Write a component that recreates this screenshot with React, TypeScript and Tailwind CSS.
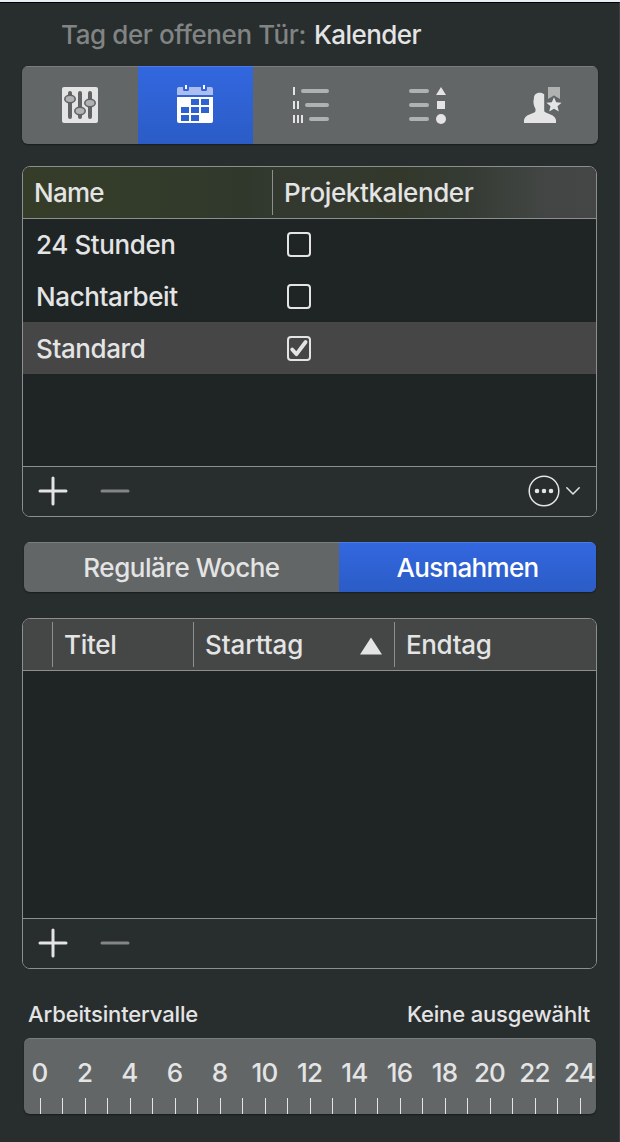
import React, { useState } from 'react';
import clsx from 'clsx';

const calendars = [
    { name: '24 Stunden', project: false },
    { name: 'Nachtarbeit', project: false },
    { name: 'Standard', project: true },
];

const hours = Array.from({ length: 13 }, (_, i) => i * 2);
const ticks = Array.from({ length: 25 }, (_, i) => 16 + i * 22.5);

const SlidersIcon = () => (
    <svg width="36" height="36" viewBox="0 0 36 36">
        <rect width="36" height="36" rx="2" fill="#e4e4e5" />
        <path d="M8 6V30M18 6V30M28 6V30" stroke="#606465" strokeWidth="4" strokeLinecap="round" />
        <g fill="#b1b3b3" stroke="#606465" strokeWidth="1.6">
            <ellipse cx="8" cy="12" rx="5.2" ry="3.7" />
            <ellipse cx="18" cy="24" rx="5.2" ry="3.7" />
            <ellipse cx="28" cy="16" rx="5.2" ry="3.7" />
        </g>
    </svg>
);

const CalendarIcon = () => (
    <svg width="36" height="38" viewBox="0 0 36 38">
        <path d="M2 2H6V4.5Q6 6 7.5 6H10.5Q12 6 12 4.5V2H24V4.5Q24 6 25.5 6H28.5Q30 6 30 4.5V2H34Q36 2 36 4V10H0V4Q0 2 2 2Z" fill="#abbeee" />
        <path d="M8 0H10V4H8ZM26 0H28V4H26Z" fill="#fff" />
        <path
            fillRule="evenodd"
            d="M0 12H36V36Q36 38 34 38H2Q0 38 0 36ZM14 14V20H22V14ZM24 14V20H32V14ZM4 22V28H12V22ZM14 22V28H22V22ZM24 22V28H32V22ZM4 30V36H12V30ZM14 30V36H22V30Z"
            fill="#fff"
        />
    </svg>
);

const OutlineIcon = () => (
    <svg width="38" height="36" viewBox="0 0 38 36">
        <path d="M2 0V8M2 14V22M6 14V22M2 28V36M6 28V36M10 28V36" stroke="#e4e4e5" strokeWidth="2" />
        <path d="M11 4H35M15 18H35M19 32H35" stroke="#b0b2b2" strokeWidth="4" strokeLinecap="round" />
    </svg>
);

const ShapesIcon = () => (
    <svg width="38" height="38" viewBox="0 0 38 38">
        <path d="M3 5H19M3 19H19M3 33H19" stroke="#b0b2b2" strokeWidth="4" strokeLinecap="round" />
        <path d="M33 1L38 9H28ZM29 15H37V23H29Z" fill="#e4e4e5" />
        <circle cx="33" cy="33" r="5" fill="#e4e4e5" />
    </svg>
);

const ResourceIcon = () => (
    <svg width="38" height="36" viewBox="0 0 38 36">
        <path d="M24 0H36V12L30 8.500L24 12Z" fill="#b0b2b2" />
        <path
            d="M15.500 5.700C17.500 5.600 19 6.200 20.200 7.300V23C20.200 24 20.400 24.600 21 25C23.500 27 31 27.500 32 33V36H0V33C1 27.500 8.500 27 11 25C11.800 24 11.600 22 11.200 21.200C10 19 9.600 17.500 9.500 15.500C9.300 14 9.700 13 9.900 12C9.700 7.700 12 5.800 15.500 5.700Z"
            fill="#e4e4e5"
        />
        <path
            d="M30 10.200L32.200 15.300L37.600 15.700L33.500 19.300L34.800 24.600L30 21.800L25.200 24.600L26.500 19.300L22.400 15.700L27.800 15.300Z"
            fill="#e4e4e5"
            stroke="#606465"
            strokeWidth="1.500"
            paintOrder="stroke"
        />
    </svg>
);

const Checkbox = ({ checked, onChange }: { checked: boolean; onChange: () => void }) => (
    <button
        role="checkbox"
        aria-checked={checked}
        onClick={onChange}
        className="flex h-[25px] w-6 items-center justify-center rounded-[4px] border-2 border-[#e4e4e5]"
    >
        {checked && (
            <svg width="20" height="20" viewBox="0 0 20 20" className="shrink-0">
                <path d="M3.200 11.500L7.500 16.200L16.600 4" fill="none" stroke="#e4e4e5" strokeWidth="3.800" strokeLinecap="round" strokeLinejoin="round" />
            </svg>
        )}
    </button>
);

const TableFooter = ({ children }: { children?: React.ReactNode }) => (
    <div className="flex h-[50px] shrink-0 items-center border-t border-[#8d8f8f] bg-[#282d2d] pb-0.5 pl-[15px] pr-4">
        <button className="mr-8" aria-label="Hinzufügen">
            <svg width="30" height="30" viewBox="0 0 30 30">
                <path d="M2 15H28M15 2V28" stroke="#e4e4e5" strokeWidth="3" strokeLinecap="round" />
            </svg>
        </button>
        <button aria-label="Entfernen">
            <svg width="30" height="30" viewBox="0 0 30 30">
                <path d="M2 15H28" stroke="#838586" strokeWidth="3" strokeLinecap="round" />
            </svg>
        </button>
        {children}
    </div>
);

const tabs = [
    { id: 'project', Icon: SlidersIcon, pad: 'pb-px' },
    { id: 'calendar', Icon: CalendarIcon, pad: 'pb-[3px] pr-px' },
    { id: 'outline', Icon: OutlineIcon, pad: 'pb-px pl-px' },
    { id: 'shapes', Icon: ShapesIcon, pad: 'pb-px pl-0.5' },
    { id: 'resource', Icon: ResourceIcon, pad: 'pb-px pl-1' },
];

const App = () => {
    const [activeTab, setActiveTab] = useState('calendar');
    const [mode, setMode] = useState('exceptions');
    const [rows, setRows] = useState(calendars);

    const toggle = (name: string) => {
        setRows(rows.map(r => (r.name === name ? { ...r, project: !r.project } : r)));
    };

    return (
        <div className="h-[1142px] w-[620px] overflow-hidden border-t-2 border-[#e9eef6] bg-[#282d2d] font-['Inter',sans-serif] text-[26px] font-[450] text-[#e4e4e5]">
            <div className="flex h-full flex-col border-r border-t border-r-[#3b4040] border-t-black pl-[22px] pr-[21px]">
                {/* Title */}
                <h1 className="flex h-[63px] shrink-0 items-center gap-2 whitespace-nowrap pl-[39px]">
                    <span className="tracking-[-0.4px] text-[#818484]">Tag der offenen Tür:</span>
                    <span className="tracking-[-0.55px]">Kalender</span>
                </h1>

                {/* Inspector tabs */}
                <div className="grid h-[78px] shrink-0 grid-cols-[116px_115px_115px_116px_114px] overflow-hidden rounded-md bg-[#626666] shadow-[0_1px_2px_rgba(0,0,0,0.4)]">
                    {tabs.map(({ id, Icon, pad }) => (
                        <button
                            key={id}
                            aria-label={id}
                            onClick={() => setActiveTab(id)}
                            className={clsx(
                                'flex items-center justify-center border-t',
                                pad,
                                activeTab === id ? 'border-[#4c7ae6] bg-linear-to-b from-[#3367df] to-[#2b5cc6]' : 'border-[#7b7e7f]'
                            )}
                        >
                            <Icon />
                        </button>
                    ))}
                </div>

                {/* Calendars */}
                <div className="mt-[22px] flex h-[351px] w-[575px] shrink-0 flex-col overflow-hidden rounded-lg border border-[#8d8f8f] bg-[#1f2424]">
                    <div className="flex h-[52px] shrink-0 items-center border-b border-[#8d8f8f] bg-[linear-gradient(90deg,#353d29_0%,#333c2a_20%,#30382c_38%,#343930_50%,#33382b_66%,#343b33_77%,#424543_90%,#454746_100%)]">
                        <div className="w-[249px] pl-[11px]">
                            <span className="tracking-[-0.75px]">Name</span>
                        </div>
                        <div className="flex h-[45px] items-center border-l border-[#8d8f8f] pl-[11px]">
                            <span className="tracking-[-0.4px]">Projektkalender</span>
                        </div>
                    </div>
                    <div className="-mt-px grow">
                        {rows.map(row => (
                            <div key={row.name} className={clsx('flex h-[52px] items-center', row.name === 'Standard' && 'bg-[#464646]')}>
                                <div className="w-[264px] pl-[13px]">
                                    <span className="tracking-[-0.4px]">{row.name}</span>
                                </div>
                                <Checkbox checked={row.project} onChange={() => toggle(row.name)} />
                            </div>
                        ))}
                    </div>
                    <TableFooter>
                        <button className="ml-auto flex items-center gap-1.5" aria-label="Aktionen">
                            <svg width="32" height="32" viewBox="0 0 32 32">
                                <circle cx="16" cy="16" r="14.800" fill="none" stroke="#e4e4e5" strokeWidth="1.500" />
                                <path d="M9 16H9.010M16 16H16.010M23 16H23.010" stroke="#e4e4e5" strokeWidth="4.600" strokeLinecap="round" />
                            </svg>
                            <svg width="14" height="8" viewBox="0 0 14 8">
                                <path d="M0.800 0.800L7 7L13.200 0.800" fill="none" stroke="#e4e4e5" strokeWidth="1.500" strokeLinecap="round" strokeLinejoin="round" />
                            </svg>
                        </button>
                    </TableFooter>
                </div>

                {/* Week / exceptions switch */}
                <div className="ml-0.5 mt-[25px] flex h-[50px] w-[572px] shrink-0 overflow-hidden rounded-md bg-[#626666] shadow-[0_1px_2px_rgba(0,0,0,0.4)]">
                    {[
                        { id: 'week', label: 'Reguläre Woche', width: 'w-[315px]', spacing: 'tracking-[-0.48px]' },
                        { id: 'exceptions', label: 'Ausnahmen', width: 'w-[257px]', spacing: 'tracking-[-0.7px]' },
                    ].map(m => (
                        <button
                            key={m.id}
                            onClick={() => setMode(m.id)}
                            className={clsx(
                                'border-t',
                                m.width,
                                mode === m.id ? 'border-[#4c7ae6] bg-linear-to-b from-[#3367df] to-[#2b5cc6] text-white' : 'border-[#7b7e7f]'
                            )}
                        >
                            <span className={m.spacing}>{m.label}</span>
                        </button>
                    ))}
                </div>

                {/* Exceptions */}
                <div className="mt-[26px] flex h-[351px] w-[575px] shrink-0 flex-col overflow-hidden rounded-lg border border-[#8d8f8f] bg-[#1f2424]">
                    <div className="flex h-[52px] shrink-0 items-center border-b border-[#8d8f8f] bg-[#444746]">
                        <div className="w-[29px]" />
                        <div className="flex h-[45px] w-[141px] items-center border-l border-[#8d8f8f] pl-[11px]">
                            <span className="tracking-[-0.3px]">Titel</span>
                        </div>
                        <div className="flex h-[45px] w-[201px] items-center justify-between border-l border-[#8d8f8f] pl-[11px] pr-3">
                            <span className="tracking-[-0.1px]">Starttag</span>
                            <svg width="22" height="18" viewBox="0 0 22 18" className="mt-0.5">
                                <path d="M11 0.500L22 17.500H0Z" fill="#e4e4e5" />
                            </svg>
                        </div>
                        <div className="flex h-[45px] items-center border-l border-[#8d8f8f] pl-[11px]">
                            <span className="tracking-[-0.35px]">Endtag</span>
                        </div>
                    </div>
                    <div className="grow" />
                    <TableFooter />
                </div>

                {/* Working intervals */}
                <div className="mt-[30px] flex h-[30px] shrink-0 items-center justify-between pl-1.5 pr-2 text-[22px]">
                    <span className="tracking-[-0.14px]">Arbeitsintervalle</span>
                    <span className="tracking-[-0.17px]">Keine ausgewählt</span>
                </div>
                <div className="ml-0.5 mt-[9px] flex h-[76px] w-[572px] shrink-0 flex-col justify-between overflow-hidden rounded-md border-t border-[#7b7e7f] bg-[#626666] shadow-[0_1px_2px_rgba(0,0,0,0.4)]">
                    <div className="-ml-[7px] flex pt-3.5">
                        {hours.map(h => (
                            <span key={h} className="w-[45px] shrink-0 text-center tracking-[-0.8px]">
                                {h}
                            </span>
                        ))}
                    </div>
                    <svg width="572" height="16" viewBox="0 0 572 16" className="shrink-0">
                        {ticks.map(x => (
                            <rect key={x} x={Math.floor(x)} width="1" height="16" fill="#e4e4e5" />
                        ))}
                    </svg>
                </div>
            </div>
        </div>
    );
};

export default App;
